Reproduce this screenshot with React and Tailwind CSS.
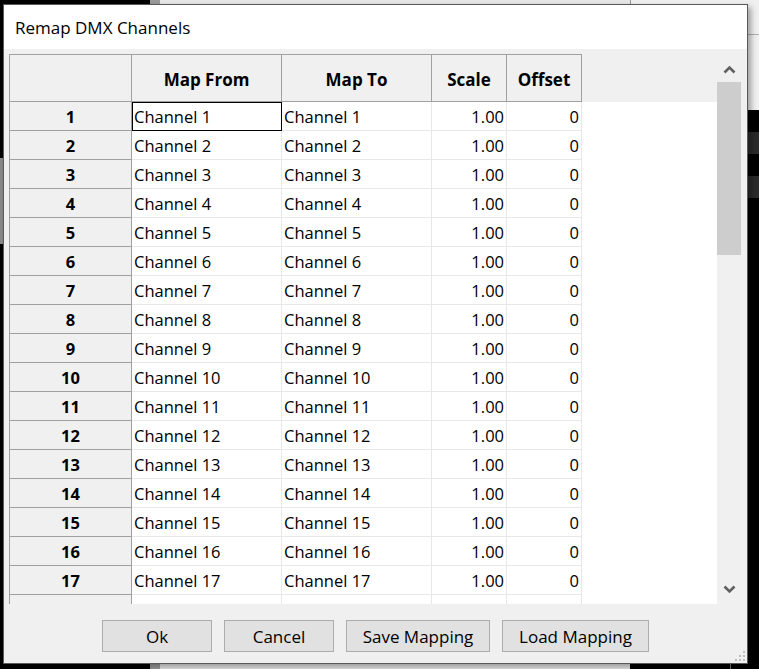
import React from "react";

const rows = Array.from({ length: 18 }, (_, i) => i + 1);

const Chevron = ({ up }) => (
  <svg width="13" height="9" viewBox="0 0 13 9">
    <polyline
      points={up ? "1.5,7.5 6.5,2.5 11.5,7.5" : "1.5,1.5 6.5,6.5 11.5,1.5"}
      fill="none"
      stroke="#606060"
      strokeWidth="2.6"
    />
  </svg>
);

const Grip = () => (
  <svg width="10" height="10" viewBox="0 0 10 10">
    <rect x="8" y="0" width="2" height="2" fill="#bdbdbd" />
    <rect x="4" y="4" width="2" height="2" fill="#bdbdbd" />
    <rect x="8" y="4" width="2" height="2" fill="#bdbdbd" />
    <rect x="0" y="8" width="2" height="2" fill="#bdbdbd" />
    <rect x="4" y="8" width="2" height="2" fill="#bdbdbd" />
    <rect x="8" y="8" width="2" height="2" fill="#bdbdbd" />
  </svg>
);

const Button = ({ label, w }) => (
  <button
    type="button"
    className={`h-[32px] ${w} bg-[#e1e1e1] border border-[#adadad] text-[17px] text-black pt-[1px]`}
  >
    {label}
  </button>
);

const App = () => {
  return (
    <div
      className="relative w-[759px] h-[669px] bg-black overflow-hidden"
      style={{ fontFamily: '"Open Sans", "Noto Sans", sans-serif' }}
    >
      {/* app behind the dialog */}
      <div className="absolute left-[150px] top-0 w-[10px] h-[669px] bg-[#9a9a9a]" />
      <div className="absolute left-[160px] top-0 w-[470px] h-[669px] bg-[#e8e8e8]" />
      <div className="absolute left-[630px] top-0 w-[129px] h-[110px] bg-[#f0f0f0] border-l border-[#9a9a9a]" />
      <div className="absolute left-[630px] top-[34px] w-[129px] h-px bg-[#b0b0b0]" />
      <div className="absolute left-[740px] top-[132px] w-[19px] h-[22px] bg-[#2a2a2a]" />
      <div className="absolute left-[740px] top-[176px] w-[19px] h-[22px] bg-[#2a2a2a]" />
      <div className="absolute left-0 top-[158px] w-[3px] h-[86px] bg-[#8a8a8a]" />
      <div className="absolute left-[730px] top-[660px] w-px h-[9px] bg-[#777]" />

      {/* dialog window */}
      <div className="absolute left-[3px] top-[4px] w-[745px] h-[660px] flex flex-col bg-[#f0f0f0] border border-[#5a5a5a] shadow-[3px_3px_6px_rgba(0,0,0,0.35)]">
        <div className="h-[44px] bg-white flex items-center pl-[11px] pt-[1px] text-[17px] text-black shrink-0">
          Remap DMX Channels
        </div>

        <div className="flex pl-[5px] pt-[5px] pr-[5px] shrink-0">
          <div className="w-[708px] h-[550px] overflow-hidden bg-white border-l border-[#a0a0a0]">
            <div className="flex h-[48px] bg-[#f0f0f0] font-bold text-[17px] text-black">
              <div className="w-[122px] border-t border-r border-b border-[#a0a0a0]" />
              <div className="w-[150px] flex items-center justify-center pt-[3px] border-t border-r border-b border-[#a0a0a0]">
                Map From
              </div>
              <div className="w-[150px] flex items-center justify-center pt-[3px] border-t border-r border-b border-[#a0a0a0]">
                Map To
              </div>
              <div className="w-[75px] flex items-center justify-center pt-[3px] border-t border-r border-b border-[#a0a0a0]">
                Scale
              </div>
              <div className="w-[75px] flex items-center justify-center pt-[3px] border-t border-r border-b border-[#a0a0a0]">
                Offset
              </div>
            </div>
            {rows.map((n) => (
              <div key={n} className="flex h-[29px] text-[16.5px] text-black">
                <div className="w-[122px] bg-[#f0f0f0] border-r border-b border-[#a0a0a0] flex items-center justify-center pt-[2px] font-bold">
                  {n}
                </div>
                <div
                  className={
                    n === 1
                      ? "w-[150px] border border-black flex items-center pl-[1px] pt-[1px]"
                      : "w-[150px] border-r border-b border-[#e8e8e8] flex items-center pl-[2px] pt-[2px]"
                  }
                >
                  Channel {n}
                </div>
                <div className="w-[150px] border-r border-b border-[#e8e8e8] flex items-center pl-[2px] pt-[2px]">
                  Channel {n}
                </div>
                <div className="w-[75px] border-r border-b border-[#e8e8e8] flex items-center justify-end pr-[2px] pt-[2px]">
                  1.00
                </div>
                <div className="w-[75px] border-r border-b border-[#e8e8e8] flex items-center justify-end pr-[2px] pt-[2px]">
                  0
                </div>
              </div>
            ))}
          </div>

          <div className="w-[24px] h-[550px] flex flex-col bg-[#f0f0f0]">
            <div className="h-[28px] flex items-center justify-center pt-[2px]">
              <Chevron up />
            </div>
            <div className="h-[173px] bg-[#cdcdcd]" />
            <div className="flex-1" />
            <div className="h-[28px] flex items-center justify-center pb-[2px]">
              <Chevron />
            </div>
          </div>
        </div>

        <div className="flex-1 relative flex justify-center gap-[12px] pt-[16px]">
          <Button label="Ok" w="w-[110px]" />
          <Button label="Cancel" w="w-[110px]" />
          <Button label="Save Mapping" w="w-[144px]" />
          <Button label="Load Mapping" w="w-[147px]" />
          <div className="absolute right-[2px] bottom-[2px]">
            <Grip />
          </div>
        </div>
      </div>
    </div>
  );
};

export default App;
